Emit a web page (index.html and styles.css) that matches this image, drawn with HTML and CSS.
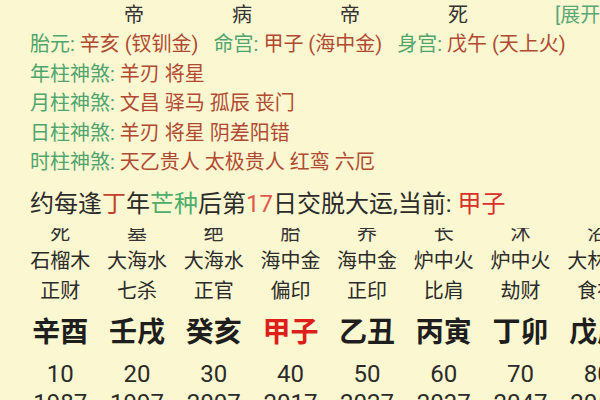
FILE: index.html
```html
<!DOCTYPE html>
<html lang="zh">
<head>
<meta charset="utf-8">
<title>大运</title>
<link rel="stylesheet" href="styles.css">
</head>
<body>
<div class="page">
  <div class="pillar-stage">
    <div class="cols4">
      <span>帝</span><span>病</span><span>帝</span><span>死</span>
    </div>
    <span class="expand">[展开]</span>
  </div>

  <div class="info">
    <p class="line"><span class="lbl">胎元:</span> <span class="val">辛亥 (钗钏金)</span><span class="gap"></span><span class="lbl">命宫:</span> <span class="val">甲子 (海中金)</span><span class="gap"></span><span class="lbl">身宫:</span> <span class="val">戊午 (天上火)</span></p>
    <p class="line"><span class="lbl">年柱神煞:</span> <span class="val">羊刃 将星</span></p>
    <p class="line"><span class="lbl">月柱神煞:</span> <span class="val">文昌 驿马 孤辰 丧门</span></p>
    <p class="line"><span class="lbl">日柱神煞:</span> <span class="val">羊刃 将星 阴差阳错</span></p>
    <p class="line"><span class="lbl">时柱神煞:</span> <span class="val">天乙贵人 太极贵人 红鸾 六厄</span></p>
  </div>

  <p class="luck">约每逢<span class="stem">丁</span>年<span class="term">芒种</span>后第<span class="num">17</span>日交脱大运,当前: <span class="cur">甲子</span></p>

  <div class="clip-row">
    <div class="grid8 stage8">
      <span>死</span><span>墓</span><span>绝</span><span>胎</span><span>养</span><span>长</span><span>沐</span><span>浴</span>
    </div>
  </div>
  <div class="grid8 nayin">
    <span>石榴木</span><span>大海水</span><span>大海水</span><span>海中金</span><span>海中金</span><span>炉中火</span><span>炉中火</span><span>大林木</span>
  </div>
  <div class="grid8 gods">
    <span>正财</span><span>七杀</span><span>正官</span><span>偏印</span><span>正印</span><span>比肩</span><span>劫财</span><span>食神</span>
  </div>
  <div class="grid8 ganzhi">
    <span>辛酉</span><span>壬戌</span><span>癸亥</span><span class="now">甲子</span><span>乙丑</span><span>丙寅</span><span>丁卯</span><span>戊辰</span>
  </div>
  <div class="grid8 ages">
    <span>10</span><span>20</span><span>30</span><span>40</span><span>50</span><span>60</span><span>70</span><span>80</span>
  </div>
  <div class="grid8 years">
    <span>1987</span><span>1997</span><span>2007</span><span>2017</span><span>2027</span><span>2037</span><span>2047</span><span>2057</span>
  </div>
</div>
</body>
</html>
```

FILE: styles.css
```css
html, body {
  margin: 0;
  padding: 0;
  width: 600px;
  height: 400px;
  overflow: hidden;
  background: #fbf7d0;
}

.page {
  font-family: "Roboto", "Noto Sans CJK SC", sans-serif;
  color: #2b2b2b;
  width: 600px;
  height: 400px;
  overflow: hidden;
}

.pillar-stage {
  display: flex;
  align-items: center;
  height: 30px;
  font-size: 20px;
  line-height: 30px;
  padding-left: 80px;
  white-space: nowrap;
  color: #333;
}

.cols4 {
  display: grid;
  grid-template-columns: repeat(4, 108px);
  text-align: center;
}

.expand {
  margin-left: 43px;
  color: #5aa878;
}

.info {
  padding-left: 30px;
}

.line {
  margin: 0;
  font-size: 20px;
  line-height: 29.5px;
  white-space: nowrap;
}

.lbl {
  color: #4fa56e;
}

.val {
  color: #b04a33;
}

.gap {
  display: inline-block;
  width: 15px;
}

.luck {
  margin: 0;
  height: 50px;
  padding-left: 30px;
  font-size: 24px;
  line-height: 52px;
  white-space: nowrap;
  color: #2b2b2b;
}

.stem {
  color: #c0422e;
}

.term {
  color: #4fae6c;
}

.num {
  color: #e0584a;
}

.cur {
  color: #d8302a;
}

.clip-row {
  height: 16px;
  overflow: hidden;
}

.grid8 {
  display: grid;
  grid-template-columns: repeat(8, 76.7px);
  padding-left: 22px;
  text-align: center;
  white-space: nowrap;
}

.stage8 {
  margin-top: -9px;
  font-size: 20px;
  line-height: 28px;
  color: #333;
}

.nayin {
  font-size: 20px;
  line-height: 34px;
}

.gods {
  font-size: 20px;
  line-height: 26px;
}

.ganzhi {
  font-size: 28px;
  font-weight: 700;
  line-height: 58px;
  color: #1e1e1e;
}

.ganzhi .now {
  color: #dc1f1a;
}

.ages {
  font-size: 24px;
  line-height: 24px;
}

.years {
  font-size: 24px;
  line-height: 34px;
}
```
